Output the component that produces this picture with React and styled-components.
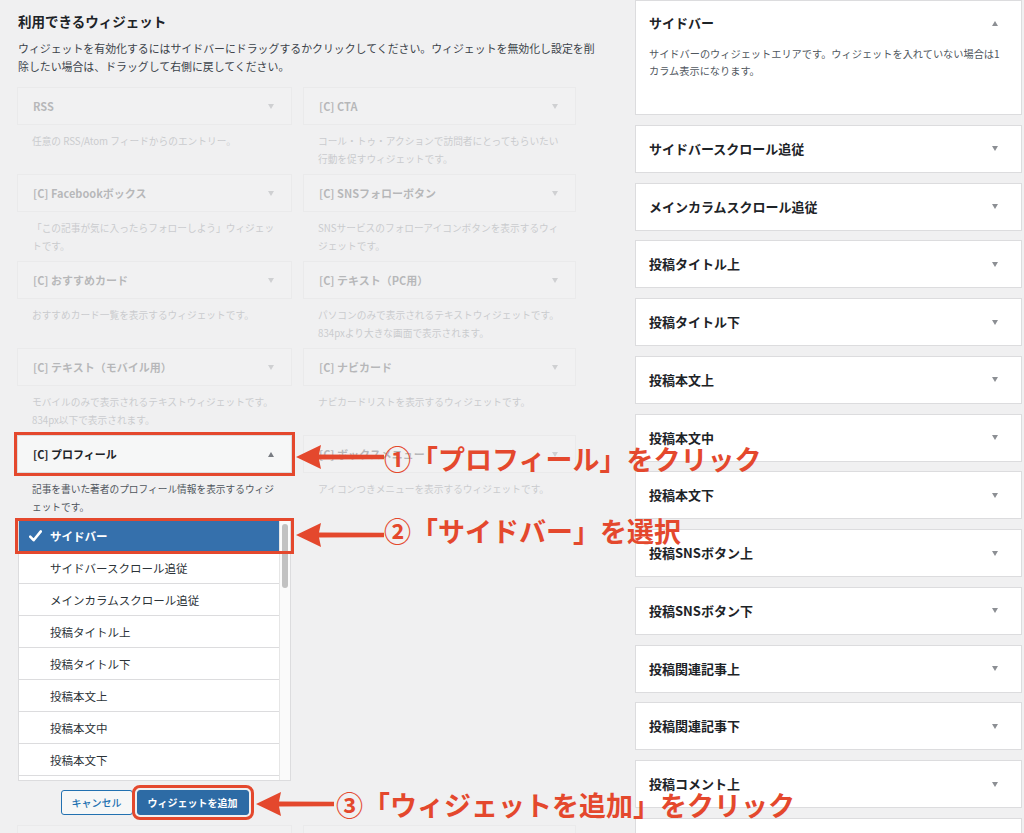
import React from 'react';
import styled, { createGlobalStyle } from 'styled-components';

const RED = '#e4482d';
const FONT = '"Noto Sans CJK JP", "Noto Sans", sans-serif';

const GlobalStyle = createGlobalStyle`
  html, body {
    margin: 0;
    padding: 0;
    background: #f0f0f1;
  }
  body {
    font-family: ${FONT};
    color: #1d2327;
  }
  * {
    box-sizing: border-box;
  }
`;

const widgets = [
  { title: 'RSS', desc: ['任意の RSS/Atom フィードからのエントリー。'] },
  { title: '[C] CTA', desc: ['コール・トゥ・アクションで訪問者にとってもらいたい', '行動を促すウィジェットです。'] },
  { title: '[C] Facebookボックス', desc: ['「この記事が気に入ったらフォローしよう」ウィジェッ', 'トです。'] },
  { title: '[C] SNSフォローボタン', desc: ['SNSサービスのフォローアイコンボタンを表示するウィ', 'ジェットです。'] },
  { title: '[C] おすすめカード', desc: ['おすすめカード一覧を表示するウィジェットです。'] },
  { title: '[C] テキスト（PC用）', desc: ['パソコンのみで表示されるテキストウィジェットです。', '834pxより大きな画面で表示されます。'] },
  { title: '[C] テキスト（モバイル用）', desc: ['モバイルのみで表示されるテキストウィジェットです。', '834px以下で表示されます。'] },
  { title: '[C] ナビカード', desc: ['ナビカードリストを表示するウィジェットです。'] },
];

const areas = [
  'サイドバー',
  'サイドバースクロール追従',
  'メインカラムスクロール追従',
  '投稿タイトル上',
  '投稿タイトル下',
  '投稿本文上',
  '投稿本文中',
  '投稿本文下',
  '投稿SNSボタン上',
  '投稿SNSボタン下',
  '投稿関連記事上',
  '投稿関連記事下',
  '投稿コメント上',
];

function App() {
  return (
    <>
      <GlobalStyle />
      <Page>
        <LeftColumn>
          <Heading>利用できるウィジェット</Heading>
          <Lead>
            ウィジェットを有効化するにはサイドバーにドラッグするかクリックしてください。ウィジェットを無効化し設定を削
            <br />
            除したい場合は、ドラッグして右側に戻してください。
          </Lead>

          <WidgetGrid>
            {widgets.map((w) => (
              <Widget key={w.title} $faded>
                <WidgetTitle>
                  {w.title}
                  <Caret />
                </WidgetTitle>
                <WidgetDesc>
                  {w.desc.map((line, i) => (
                    <React.Fragment key={i}>
                      {i > 0 && <br />}
                      {line}
                    </React.Fragment>
                  ))}
                </WidgetDesc>
              </Widget>
            ))}

            <Widget>
              <WidgetTitle $active>
                [C] プロフィール
                <Caret $up />
              </WidgetTitle>
              <WidgetDesc $dark>
                記事を書いた著者のプロフィール情報を表示するウィジ
                <br />
                ェットです。
              </WidgetDesc>
              <AreaList>
                <AreaItems>
                  {areas.slice(0, 9).map((name, i) => (
                    <AreaItem key={name} $selected={i === 0}>
                      <CheckSlot>
                        {i === 0 && (
                          <svg width="13" height="12" viewBox="0 0 13 12">
                            <path d="M1.2 6.6 L4.6 10.2 L11.8 1.4" fill="none" stroke="#fff" strokeWidth="2.6" strokeLinecap="round" strokeLinejoin="round" />
                          </svg>
                        )}
                      </CheckSlot>
                      {name}
                    </AreaItem>
                  ))}
                </AreaItems>
                <Scrollbar>
                  <Thumb />
                </Scrollbar>
                <RowCallout />
              </AreaList>
              <Actions>
                <Button>キャンセル</Button>
                <Button $primary>ウィジェットを追加</Button>
              </Actions>
            </Widget>

            <Widget $faded>
              <WidgetTitle>
                [C] ボックスメニュー
                <Caret />
              </WidgetTitle>
              <WidgetDesc>アイコンつきメニューを表示するウィジェットです。</WidgetDesc>
            </Widget>

            <Widget $faded>
              <WidgetTitle />
            </Widget>
            <Widget $faded>
              <WidgetTitle />
            </Widget>
          </WidgetGrid>
        </LeftColumn>

        <RightColumn>
          <AreaBox $expanded>
            <AreaHead>
              サイドバー
              <Caret $up $dark />
            </AreaHead>
            <AreaText>
              サイドバーのウィジェットエリアです。ウィジェットを入れていない場合は1
              <br />
              カラム表示になります。
            </AreaText>
          </AreaBox>
          {areas.slice(1).map((name) => (
            <AreaBox key={name}>
              <AreaHead>
                {name}
                <Caret $dark />
              </AreaHead>
            </AreaBox>
          ))}
          <AreaBox />
        </RightColumn>

        <Arrow $left={296} $top={445} $length={88} />
        <Note $left={384} $top={443}>①「プロフィール」をクリック</Note>

        <Arrow $left={296} $top={523} $length={88} />
        <Note $left={384} $top={515}>②「サイドバー」を選択</Note>

        <Arrow $left={256} $top={792} $length={78} />
        <Note $left={336} $top={789}>③「ウィジェットを追加」をクリック</Note>
      </Page>
    </>
  );
}

function Arrow({ $left, $top, $length }) {
  const h = 24;
  const mid = h / 2;
  return (
    <ArrowSvg $left={$left} $top={$top} width={$length} height={h} viewBox={`0 0 ${$length} ${h}`}>
      <polygon
        points={`0,${mid} 25,0 23,${mid - 2.6} ${$length},${mid - 2.2} ${$length},${mid + 2.2} 23,${mid + 2.6} 25,${h}`}
        fill={RED}
      />
    </ArrowSvg>
  );
}

const Page = styled.div`
  position: relative;
  display: flex;
  width: 1024px;
  height: 833px;
  overflow: hidden;
  padding-left: 17px;
`;

const LeftColumn = styled.div`
  width: 559px;
  padding-top: 12px;
`;

const Heading = styled.h2`
  margin: 0;
  font-size: 13.5px;
  line-height: 18px;
  font-weight: 700;
  color: #1d2327;
  padding-left: 1px;
`;

const Lead = styled.p`
  margin: 9px 0 0;
  font-size: 10.9px;
  line-height: 18px;
  color: #3c434a;
  white-space: nowrap;
  padding-left: 1px;
`;

const WidgetGrid = styled.div`
  display: grid;
  grid-template-columns: 275px 273px;
  column-gap: 11px;
  row-gap: 6px;
  margin-top: 12px;
  align-items: start;
`;

const Widget = styled.div`
  opacity: ${(p) => (p.$faded ? 0.27 : 1)};
  padding-bottom: ${(p) => (p.$faded ? 0 : 4)}px;
`;

const WidgetTitle = styled.div`
  display: flex;
  align-items: center;
  justify-content: space-between;
  height: 38px;
  padding: 0 17px 0 15px;
  background: #f6f7f7;
  border: 1px solid #dcdcde;
  font-size: 11px;
  font-weight: 700;
  color: #1d2327;
  outline: ${(p) => (p.$active ? `3px solid ${RED}` : 'none')};
`;

const Caret = styled.span`
  width: 0;
  height: 0;
  border-left: 3.5px solid transparent;
  border-right: 3.5px solid transparent;
  ${(p) =>
    p.$up
      ? `border-bottom: 5px solid ${p.$dark ? '#8c8f94' : '#787c82'};`
      : `border-top: 5px solid ${p.$dark ? '#8c8f94' : '#787c82'};`}
`;

const WidgetDesc = styled.div`
  margin-top: 8px;
  padding: 0 15px;
  font-size: 9.7px;
  line-height: 17.5px;
  color: ${(p) => (p.$dark ? '#50575e' : '#646970')};
  white-space: nowrap;
`;

const AreaList = styled.div`
  position: relative;
  display: flex;
  height: 262px;
  margin: 3px 1px 0 1px;
  background: #fff;
  border: 1px solid #dcdcde;
`;

const AreaItems = styled.div`
  flex: 1;
  overflow: hidden;
`;

const AreaItem = styled.div`
  display: flex;
  align-items: center;
  height: 32px;
  border-bottom: 1px solid #dcdcde;
  font-size: 11.5px;
  font-weight: ${(p) => (p.$selected ? 700 : 400)};
  color: ${(p) => (p.$selected ? '#fff' : '#2c3338')};
  background: ${(p) => (p.$selected ? '#3570ac' : '#fff')};
`;

const CheckSlot = styled.span`
  display: flex;
  align-items: center;
  justify-content: center;
  width: 31px;
  flex-shrink: 0;
  padding-left: 2px;
`;

const Scrollbar = styled.div`
  width: 11px;
  flex-shrink: 0;
  background: #fafafa;
  border-left: 1px solid #e6e6e6;
  padding: 4px 2px 0 2px;
`;

const Thumb = styled.div`
  height: 64px;
  border-radius: 4px;
  background: #c1c1c1;
`;

const RowCallout = styled.div`
  position: absolute;
  top: -2px;
  left: -4px;
  right: -4px;
  height: 36px;
  border: 3px solid ${RED};
  pointer-events: none;
`;

const Actions = styled.div`
  display: flex;
  justify-content: center;
  gap: 4px;
  margin-top: 9px;
`;

const Button = styled.button`
  display: inline-flex;
  align-items: center;
  height: 25px;
  padding: 0 10px;
  border-radius: 3px;
  font-family: ${FONT};
  font-size: 10px;
  font-weight: ${(p) => (p.$primary ? 700 : 500)};
  line-height: 1;
  cursor: pointer;
  border: 1px solid ${(p) => (p.$primary ? '#2d6ba5' : '#2271b1')};
  background: ${(p) => (p.$primary ? '#2d6ba5' : '#f6f7f7')};
  color: ${(p) => (p.$primary ? '#fff' : '#2271b1')};
  outline: ${(p) => (p.$primary ? `3px solid ${RED}` : 'none')};
  outline-offset: 2px;
`;

const RightColumn = styled.div`
  display: flex;
  flex-direction: column;
  gap: 9.75px;
  width: 387px;
  margin-left: auto;
  margin-right: 2px;
`;

const AreaBox = styled.div`
  flex-shrink: 0;
  height: ${(p) => (p.$expanded ? 115 : 48)}px;
  background: #fff;
  border: 1px solid #dcdcde;
  padding: ${(p) => (p.$expanded ? '13px 13px 0' : '0 13px')};
  display: flex;
  flex-direction: column;
  justify-content: ${(p) => (p.$expanded ? 'flex-start' : 'center')};
`;

const AreaHead = styled.div`
  display: flex;
  align-items: center;
  justify-content: space-between;
  padding-right: 10px;
  font-size: 13px;
  font-weight: 700;
  line-height: 18px;
  color: #1d2327;
`;

const AreaText = styled.div`
  margin-top: 12.5px;
  font-size: 10.2px;
  line-height: 17px;
  color: #50575e;
  white-space: nowrap;
`;

const ArrowSvg = styled.svg`
  position: absolute;
  left: ${(p) => p.$left}px;
  top: ${(p) => p.$top}px;
`;

const Note = styled.div`
  position: absolute;
  left: ${(p) => p.$left}px;
  top: ${(p) => p.$top}px;
  font-size: 27px;
  line-height: 32px;
  font-weight: 700;
  color: ${RED};
  white-space: nowrap;
`;

export default App;
